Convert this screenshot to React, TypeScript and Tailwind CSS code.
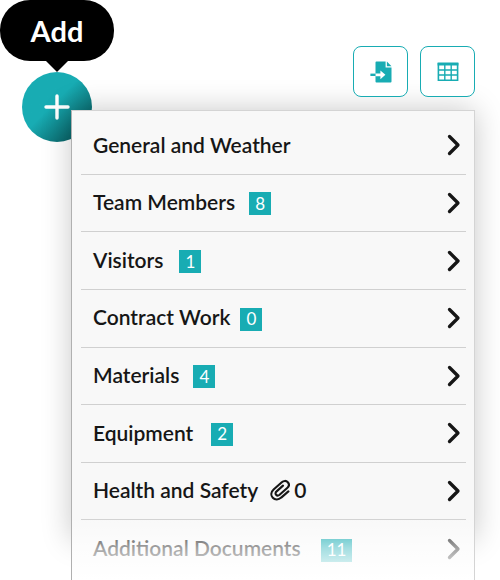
type Section = {
  label: string;
  count?: number;
  attachments?: number;
  gap?: string;
};

const sections: Section[] = [
  { label: "General and Weather" },
  { label: "Team Members", count: 8, gap: "ml-3.5" },
  { label: "Visitors", count: 1, gap: "ml-4" },
  { label: "Contract Work", count: 0, gap: "ml-2.5" },
  { label: "Materials", count: 4, gap: "ml-3.5" },
  { label: "Equipment", count: 2, gap: "ml-[18px]" },
  { label: "Health and Safety", attachments: 0 },
  { label: "Additional Documents", count: 11, gap: "ml-5" },
];

const ImportIcon = () => (
  <svg width="22" height="22" viewBox="0 0 22 22" aria-hidden="true">
    <path
      d="M6.4 0.5H15.6V6.4H21.5V20.6Q21.5 21.5 20.6 21.5H6.4Q5.5 21.5 5.5 20.6V1.4Q5.5 0.5 6.4 0.5Z"
      fill="#18acb3"
    />
    <path d="M16.9 0.6L21.5 5.2H16.9Z" fill="#18acb3" />
    <path d="M5.5 12.4H10.4V9.4L15.4 13.8L10.4 18.2V15.2H5.5Z" fill="#fff" />
    <path d="M0.4 12.6H5.4V15H0.4Z" fill="#18acb3" />
  </svg>
);

const TableIcon = () => (
  <svg width="22" height="20" viewBox="0 0 22 20" fill="none" stroke="#18acb3" aria-hidden="true">
    <path d="M1.4 1.8H20.6V18.2H1.4Z" strokeWidth="1.6" />
    <path d="M0.6 2H21.4" strokeWidth="3" />
    <path d="M1 8H21M1 13H21M7.8 2V18M14.2 2V18" strokeWidth="1.4" />
  </svg>
);

const ClipIcon = () => (
  <svg width="20" height="22" viewBox="0 0 20 22" fill="none" aria-label="Attachments" role="img">
    <path
      d="M18.4 12.4L11.2 18.6C8.6 21 5 21.2 2.8 18.8C0.6 16.4 1 13 3.6 10.6L11.8 3.2C13.6 1.6 16.2 1.4 17.8 3.2C19.4 5 19 7.4 17.2 9L9.6 15.8C8.4 16.8 7 16.8 6.1 15.8C5.2 14.8 5.4 13.4 6.6 12.4L13 6.6"
      stroke="#161616"
      strokeWidth="2.1"
      strokeLinecap="round"
      strokeLinejoin="round"
    />
  </svg>
);

const Chevron = () => (
  <svg width="14" height="22" viewBox="0 0 14 22" fill="none" aria-hidden="true">
    <path
      d="M2.5 2.5L11 11L2.5 19.5"
      stroke="#161616"
      strokeWidth="3.3"
      strokeLinecap="round"
      strokeLinejoin="round"
    />
  </svg>
);

const SectionRow = ({ label, count, attachments, gap }: Section) => (
  <li className="border-b border-[#d0d0d0] last:border-b-0">
    <button type="button" className="flex h-full w-full items-center pr-[5px] pl-3 text-left text-[#161616]">
      <span className="pb-0.5 text-[21px] font-semibold">{label}</span>
      {count !== undefined && (
        <span
          className={`${gap} mt-0.5 flex h-[23px] min-w-[22px] items-center justify-center bg-[#18acb3] px-1.5 text-[17px] leading-5 text-white`}
        >
          {count}
        </span>
      )}
      {attachments !== undefined && (
        <span className="ml-3 flex items-center gap-1 pb-0.5 text-[21px] font-semibold">
          <ClipIcon />
          {attachments}
        </span>
      )}
      <span className="ml-auto">
        <Chevron />
      </span>
    </button>
  </li>
);

export default function App() {
  return (
    <div className="min-h-screen overflow-hidden bg-white font-['Lato',sans-serif]">
      {/* Toolbar */}
      <header className="flex items-start justify-between pr-[25px]">
        <div className="flex flex-col items-center">
          <div
            id="add-tip"
            role="tooltip"
            className="w-[114px] rounded-[30px] bg-black py-3 text-center text-[29px] leading-[37px] font-bold text-white"
          >
            Add
          </div>
          <svg width="22" height="11" viewBox="0 0 22 11" aria-hidden="true">
            <path d="M0 0H22L11 11Z" fill="#000" />
          </svg>
          <button
            type="button"
            aria-label="Add"
            aria-describedby="add-tip"
            className="flex size-[70px] items-center justify-center rounded-full bg-linear-to-br from-[#18acb3] from-45% to-[#0b6a6e] to-80%"
          >
            <svg width="26" height="26" viewBox="0 0 26 26" aria-hidden="true">
              <path d="M13 2V24M2 13H24" stroke="#fff" strokeWidth="3.4" strokeLinecap="round" />
            </svg>
          </button>
        </div>

        <div className="relative z-10 mt-[46px] flex gap-3">
          <button
            type="button"
            aria-label="Import"
            className="flex h-[51px] w-[55px] items-center justify-center rounded-lg border border-[#18acb3] bg-white"
          >
            <ImportIcon />
          </button>
          <button
            type="button"
            aria-label="Table view"
            className="flex h-[51px] w-[55px] items-center justify-center rounded-lg border border-[#18acb3] bg-white"
          >
            <TableIcon />
          </button>
        </div>
      </header>

      {/* Section list */}
      <nav aria-label="Report sections" className="relative -mt-8 mr-[25px] ml-[71px]">
        <div className="absolute inset-x-0 top-0 bottom-10 shadow-[0_0_28px_rgba(0,0,0,0.22)]" />
        <div className="relative border border-b-0 border-[#d4d4d4] border-l-[#b0b0b0] bg-[#f8f8f8] pt-1.5 pr-2 pb-0.5 pl-[9px]">
          <ul className="grid min-h-[461px] auto-rows-fr">
            {sections.map((section) => (
              <SectionRow key={section.label} {...section} />
            ))}
          </ul>
          <div className="pointer-events-none absolute inset-x-0 bottom-0 h-16 bg-linear-to-b from-white/0 via-white/60 to-white" />
        </div>
      </nav>
    </div>
  );
}
